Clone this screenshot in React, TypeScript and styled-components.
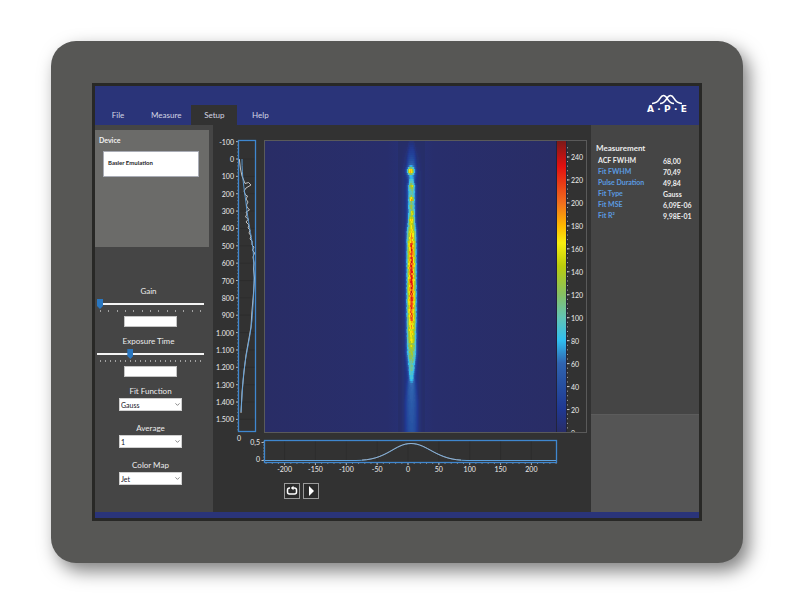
import React, { useState } from "react";
import styled, { createGlobalStyle, css } from "styled-components";
import { ChevronDown } from "lucide-react";

const font = `Lato, "Open Sans", sans-serif`;

const color = {
  navy: "#2a3479",
  bezel: "#575755",
  frame: "#282826",
  side: "#454545",
  stage: "#323232",
  panel: "#6b6b69",
  lowPanel: "#555555",
  accent: "#3f87cf",
  link: "#5b9be0",
  text: "#ececec",
};

const GlobalStyle = createGlobalStyle`
  * { box-sizing: border-box; }
  body { margin: 0; background: #ffffff; font-family: ${font}; }
  button, input, select { font-family: inherit; margin: 0; }
`;

const Page = styled.main`
  min-height: 100vh;
  padding: 41px 51px 42px;
  display: flex;
  flex-direction: column;
`;

const Device = styled.div`
  flex: 1;
  display: flex;
  padding: 42px 41px;
  border-radius: 25px;
  background: ${color.bezel};
  box-shadow: 6px 8px 18px rgba(0, 0, 0, 0.5);
`;

const Screen = styled.div`
  flex: 1;
  display: flex;
  flex-direction: column;
  border: 3px solid ${color.frame};
  background: ${color.stage};
`;

const Header = styled.header`
  display: flex;
  align-items: flex-end;
  justify-content: space-between;
  height: 39px;
  background: ${color.navy};
`;

const Menu = styled.nav`
  display: flex;
`;

const MenuItem = styled.button<{ $active: boolean }>`
  height: 20px;
  min-width: 46px;
  padding: 0 10px;
  border: 0;
  background: ${(p) => (p.$active ? color.stage : "transparent")};
  color: #d4d6e4;
  font-size: 8px;
  line-height: 20px;
`;

const Brand = styled.a`
  display: flex;
  flex-direction: column;
  align-items: center;
  gap: 1px;
  width: 40px;
  margin: 0 12px 12px 0;
  color: #ffffff;
  text-decoration: none;
`;

const BrandName = styled.span`
  display: flex;
  justify-content: space-between;
  width: 100%;
  height: 7px;
  font: bold 9px/7px "DejaVu Sans", sans-serif;
`;

const Body = styled.div`
  flex: 1;
  display: grid;
  grid-template-columns: 118px minmax(0, 1fr) 108px;
`;

const Sidebar = styled.aside`
  padding-top: 5px;
  background: ${color.side};
`;

const DevicePanel = styled.section`
  height: 117px;
  margin-right: 4px;
  padding: 4px 10px 0 4px;
  background: ${color.panel};
`;

const PanelTitle = styled.h2`
  margin: 0;
  color: #f2f2f2;
  font-size: 7px;
  font-weight: 700;
  line-height: 12px;
`;

const DeviceList = styled.ul`
  height: 26px;
  margin: 5px 0 0 4px;
  padding: 0 4px;
  list-style: none;
  border: 1px solid #a9acb5;
  background: #ffffff;
  color: #1e1e28;
  font-size: 6px;
  font-weight: 700;
  line-height: 22px;
`;

const Controls = styled.form`
  display: flex;
  flex-direction: column;
  padding: 37px 9px 0 2px;
`;

const Field = styled.div<{ $kind: "slider" | "choice" }>`
  display: flex;
  flex-direction: column;
  align-items: center;
  ${(p) =>
    p.$kind === "slider"
      ? css`
          height: 50px;

          > label {
            padding-right: 4px;
          }
        `
      : css`
          height: 37px;
        `}
`;

const FieldLabel = styled.label`
  color: ${color.text};
  font-size: 8px;
  line-height: 14px;
`;

const Slider = styled.input`
  appearance: none;
  width: 100%;
  height: 12px;
  background: linear-gradient(#f4f4f4, #f4f4f4) center / 100% 2px no-repeat;

  &::-webkit-slider-thumb {
    appearance: none;
    width: 6px;
    height: 10px;
    background: #2976bf;
    clip-path: polygon(0 0, 100% 0, 100% 70%, 50% 100%, 0 70%);
  }
`;

const TickRow = styled.div`
  display: flex;
  justify-content: space-between;
  width: 100%;
  height: 6px;
  padding: 0 3px;
`;

const Tick = styled.i`
  width: 1px;
  height: 2px;
  background: #a2a2a2;
`;

const NumberBox = styled.input`
  width: 53px;
  height: 11px;
  padding: 0 2px;
  border: 1px solid #c4c4c4;
  background: #ffffff;
  font-size: 7px;
`;

const SelectWrap = styled.div`
  display: grid;
  width: 63px;
  height: 13px;
  align-items: center;

  > * {
    grid-area: 1 / 1;
  }
  > svg {
    justify-self: end;
    margin-right: 1px;
    color: #777777;
    pointer-events: none;
  }
`;

const Select = styled.select`
  appearance: none;
  width: 100%;
  height: 13px;
  padding: 0 1px;
  border: 1px solid #cfcfcf;
  border-radius: 0;
  background: #ffffff;
  color: #14141e;
  font-size: 7px;
  line-height: 10px;
`;

const Stage = styled.section`
  display: flex;
  flex-direction: column;
  padding-top: 8px;
  background: ${color.stage};
`;

const PlotRow = styled.div`
  display: grid;
  grid-template-columns: 51fr 327fr;
`;

const Plot = styled.svg`
  display: block;
  width: 100%;
  height: auto;
  overflow: visible;
  font-family: ${font};
  font-size: 7px;
  fill: ${color.text};
`;

const Transport = styled.div`
  display: flex;
  gap: 3px;
  padding: 9px 0 0 71px;
`;

const IconButton = styled.button`
  display: grid;
  place-items: center;
  width: 16px;
  height: 16px;
  padding: 0;
  border: 1px solid #9a9a9a;
  background: #2b2b2b;
  color: #ffffff;
`;

const Results = styled.aside`
  display: grid;
  grid-template-rows: 289fr 98fr;
  background: ${color.side};
`;

const ResultsTop = styled.section`
  padding: 17px 5px 0;
`;

const ResultsBottom = styled.section`
  border-top: 1px solid #5c5c5c;
  background: ${color.lowPanel};
`;

const ResultsTitle = styled.h2`
  margin: 0;
  color: ${color.text};
  font-size: 8px;
  font-weight: 700;
  line-height: 12px;
`;

const ResultTable = styled.table`
  width: 100%;
  margin-top: 1px;
  border-collapse: collapse;
  font-size: 7px;
  line-height: 11px;
  text-align: left;
`;

const ResultName = styled.th<{ $plain: boolean }>`
  padding: 0 2px;
  color: ${(p) => (p.$plain ? color.text : color.link)};
  font-weight: 700;
  height: 11px;
`;

const ResultValue = styled.td`
  width: 31px;
  padding: 1px 0 0;
  color: ${color.text};
  font-weight: 700;
  line-height: 10px;
  white-space: nowrap;
`;

const Footer = styled.footer`
  height: 6px;
  background: ${color.navy};
`;

type Stop = [number, number, number, number];
const jet: Stop[] = [
  [0, 40, 45, 104],
  [20, 32, 56, 146],
  [40, 38, 78, 160],
  [60, 48, 100, 176],
  [80, 48, 190, 240],
  [100, 98, 196, 180],
  [120, 134, 192, 100],
  [145, 186, 204, 12],
  [165, 248, 238, 16],
  [180, 255, 184, 0],
  [200, 240, 110, 30],
  [232, 226, 16, 16],
  [254, 124, 26, 24],
];

function jetColor(v: number) {
  const value = Math.max(0, Math.min(254, v));
  let i = 1;
  while (i < jet.length - 1 && jet[i][0] < value) i++;
  const a = jet[i - 1];
  const b = jet[i];
  const t = (value - a[0]) / (b[0] - a[0]);
  const mix = (k: 1 | 2 | 3) => Math.round(a[k] + (b[k] - a[k]) * t);
  return `rgb(${mix(1)},${mix(2)},${mix(3)})`;
}

/* Distance from the top edge, level of the plateau, its half width, extra level of the core. */
const beam: [number, number, number, number][] = [
  [0, 8, 3, 0],
  [15, 22, 4, 0],
  [24, 40, 4, 0],
  [34, 40, 4, 0],
  [39, 66, 3, 0],
  [44, 80, 4, 6],
  [52, 74, 4, 6],
  [66, 76, 4, 6],
  [78, 84, 4, 14],
  [90, 126, 5, 26],
  [104, 146, 5, 38],
  [130, 150, 5, 46],
  [160, 150, 5, 46],
  [176, 142, 5, 32],
  [195, 122, 5, 14],
  [212, 94, 5, 12],
  [224, 74, 4, 8],
  [236, 58, 3, 8],
  [242, 34, 4, 4],
  [262, 26, 6, 2],
  [292, 18, 6, 0],
];

const spots: [number, number, number, number][] = [
  [-1, 29, 128, 3.5],
  [0, 44, 46, 2],
  [0, 57, 90, 2],
  [0, 65, 34, 2],
  [1, 71, 50, 2],
  [0, 78, 50, 3],
];

const rand = (x: number, y: number) => {
  const s = Math.sin(x * 127.1 + y * 311.7) * 43758.5453;
  return s - Math.floor(s);
};

function level(dx: number, y: number) {
  let i = 1;
  while (i < beam.length - 1 && beam[i][0] < y) i++;
  const a = beam[i - 1];
  const b = beam[i];
  const t = (y - a[0]) / (b[0] - a[0]);
  const mix = (k: 1 | 2 | 3) => a[k] + (b[k] - a[k]) * t;
  const plateau = mix(1);
  let v = plateau * Math.exp(-Math.pow(Math.abs(dx) / mix(2), 3.4));
  v += mix(3) * Math.exp(-((dx / 1.6) ** 2));
  for (const [sx, sy, amount, r] of spots) {
    v += amount * Math.exp(-((dx - sx) ** 2 + (y - sy) ** 2) / (r * r));
  }
  v *= 1 + (rand(dx, y) - 0.5) * (plateau > 60 ? 0.26 : 0.06);
  return v + 24 * Math.exp(-((dx / 7) ** 2)) * Math.min(1, y / 30);
}

const cells: { x: number; y: number; fill: string }[] = [];
for (let y = 0; y < 291; y += 2) {
  for (let dx = -13; dx <= 13; dx++) {
    cells.push({ x: 147 + dx, y, fill: jetColor(level(dx, y)) });
  }
}

const steps = (from: number, to: number, by: number) =>
  Array.from({ length: Math.floor((to - from) / by) + 1 }, (_, i) => from + i * by);

const thousands = (n: number) =>
  n >= 1000 ? `${Math.floor(n / 1000)}.${String(n % 1000).padStart(3, "0")}` : String(n);

function DelayProfile() {
  const y = (v: number) => 26 + v * 0.1736;
  return (
    <Plot viewBox="0 0 51 300" role="img" aria-label="Vertical profile">
      {steps(-100, 1500, 100).map((v) => (
        <g key={v}>
          <text x="21" y={y(v) + 3} textAnchor="end">{thousands(v)}</text>
          <path d={`M23 ${y(v)}H25`} stroke="#b8b8b8" />
          <path d={`M26 ${y(v)}H42`} stroke="#2d2d2d" />
        </g>
      ))}
      {steps(-100, 1560, 20).map((v) => (
        <path key={v} d={`M24 ${y(v)}h1`} stroke="#999999" strokeWidth="0.6" />
      ))}
      <rect x="25.5" y="7.5" width="17" height="291" fill="none" stroke={color.accent} strokeWidth="1.3" />
      <path
        d="M26.3 26L27.5 36L29 43L31 48L32 50.5L35.5 49.5L38 52L33 55L31 58L32.5 62L34.5 63L33 66L35 69L33.5 72L34 74L36.5 77L33 79L34 81L32.5 84L35.5 86L33 89L36 92L35 95L37 97L36 100L38 103L37 106L39 108L39 112L41 114L39.5 117L41.5 120L40 124L41 130L40.5 136L41.5 145L40.5 160L38.8 180L38 194L35.5 208L33 222L31 239L29 259L28 280"
        fill="none"
        stroke="#d0d0d0"
        strokeWidth="0.9"
      />
      <path
        d="M29 26C29 44 31 54 33 70C35 89 38 100 40 116C42 140 41 160 39 187C36 213 32 222 30 248L28 279"
        fill="none"
        stroke="#5da2df"
        strokeWidth="0.9"
      />
      <text x="26" y="308" textAnchor="middle">0</text>
    </Plot>
  );
}

function Heatmap() {
  const y = (v: number) => 299.5 - v * 1.148;
  return (
    <Plot viewBox="0 0 327 300" role="img" aria-label="Intensity map">
      <defs>
        <linearGradient id="scale" x1="0" y1="1" x2="0" y2="0">
          {jet.map(([v]) => (
            <stop key={v} offset={v / 254} stopColor={jetColor(v)} />
          ))}
        </linearGradient>
        <linearGradient id="field">
          <stop offset="0" stopColor="#292d66" />
          <stop offset="0.42" stopColor="#282e6c" />
          <stop offset="0.5" stopColor="#26327a" />
          <stop offset="0.58" stopColor="#282e6c" />
          <stop offset="1" stopColor="#292d66" />
        </linearGradient>
        <filter id="soften">
          <feGaussianBlur stdDeviation="0.4" />
        </filter>
        <clipPath id="mapArea">
          <rect x="1" y="8" width="322" height="291" />
        </clipPath>
      </defs>
      <g clipPath="url(#mapArea)">
        <rect x="1" y="8" width="291" height="291" fill="url(#field)" />
        <g transform="translate(0 8)" filter="url(#soften)">
          {cells.map((c) => (
            <rect key={`${c.x}-${c.y}`} x={c.x} y={c.y} width="1" height="2" fill={c.fill} shapeRendering="crispEdges" />
          ))}
        </g>
        <rect x="292" y="8" width="11" height="291" fill="#22243c" />
        <rect x="293" y="8" width="9" height="291" fill="url(#scale)" />
        {steps(0, 250, 4).map((v) => (
          <path key={v} d={`M303 ${y(v)}h1`} stroke="#cccccc" strokeWidth="0.8" />
        ))}
        {steps(0, 240, 20).map((v) => (
          <g key={v}>
            <path d={`M303 ${y(v)}h2.5`} stroke="#cccccc" />
            <text x="307" y={y(v) + 3}>{v}</text>
          </g>
        ))}
      </g>
      <rect x="0.5" y="7.5" width="322" height="292" fill="none" stroke="#5a5a5a" />
    </Plot>
  );
}

function TimeProfile() {
  const x = (v: number) => 195 + v * 0.617;
  return (
    <Plot viewBox="0 0 378 41" role="img" aria-label="Horizontal profile">
      <text x="47" y="12" textAnchor="end">0,5</text>
      <text x="47" y="29" textAnchor="end">0</text>
      <path d="M48.500 9.500H51M48.500 27.500H51" stroke="#b8b8b8" />
      {steps(-200, 200, 50).map((v) => (
        <g key={v}>
          <path d={`M${x(v)} 8V29`} stroke="#2d2d2d" />
          <path d={`M${x(v)} 30V32`} stroke="#b8b8b8" />
          <text x={x(v)} y="39" textAnchor="middle">{v}</text>
        </g>
      ))}
      {steps(-230, 240, 10).map((v) => (
        <path key={v} d={`M${x(v)} 30v1`} stroke="#999999" strokeWidth="0.8" />
      ))}
      {steps(9, 28, 3).map((v) => (
        <path key={v} d={`M50 ${v}h1`} stroke="#999999" strokeWidth="0.8" />
      ))}
      <rect x="51.500" y="7.500" width="292" height="22" fill="none" stroke={color.accent} strokeWidth="1.3" />
      <path
        d="M52 27.500H143C174 27.500 182 10.500 198 10.500S224 27.500 254 27.500H343"
        fill="none"
        stroke="#5da2df"
      />
      <path
        d="M149 27C175 26 181 10.500 198 10.500S222 26 248 27"
        fill="none"
        stroke="#a9b8c8"
        strokeWidth="0.7"
      />
    </Plot>
  );
}

function SliderField({ id, label, value, ticks }: { id: string; label: string; value: number; ticks: number }) {
  const [position, setPosition] = useState(value);
  return (
    <Field $kind="slider">
      <FieldLabel htmlFor={id}>{label}</FieldLabel>
      <Slider id={id} type="range" value={position} onChange={(e) => setPosition(Number(e.target.value))} />
      <TickRow aria-hidden="true">
        {steps(1, ticks, 1).map((n) => (
          <Tick key={n} />
        ))}
      </TickRow>
      <NumberBox type="text" aria-label={`${label} value`} />
    </Field>
  );
}

function SelectField({ id, label, options }: { id: string; label: string; options: string[] }) {
  return (
    <Field $kind="choice">
      <FieldLabel htmlFor={id}>{label}</FieldLabel>
      <SelectWrap>
        <Select id={id}>
          {options.map((o) => (
            <option key={o}>{o}</option>
          ))}
        </Select>
        <ChevronDown size={7} strokeWidth={3} />
      </SelectWrap>
    </Field>
  );
}

const menu = ["File", "Measure", "Setup", "Help"];

const results = [
  ["ACF FWHM", "68,00"],
  ["Fit FWHM", "70,49"],
  ["Pulse Duration", "49,84"],
  ["Fit Type", "Gauss"],
  ["Fit MSE", "6,09E-06"],
  ["Fit R²", "9,98E-01"],
];

export default function App() {
  const [tab, setTab] = useState("Setup");
  return (
    <Page>
      <GlobalStyle />
      <Device>
        <Screen>
          <Header>
            <Menu>
              {menu.map((name) => (
                <MenuItem key={name} $active={name === tab} onClick={() => setTab(name)}>
                  {name}
                </MenuItem>
              ))}
            </Menu>
            <Brand href="#">
              <svg width="32" height="11" viewBox="0 0 32 11" fill="none" stroke="currentColor" strokeWidth="1.6">
                <path d="M1 9.500C10 9.500 8 1.500 12.500 1.500S16 9.500 23 9.500" />
                <path d="M9 9.500C16 9.500 15 1.500 19.500 1.500S22 9.500 31 9.500" />
              </svg>
              <BrandName>
                <span>A</span>
                <span>·</span>
                <span>P</span>
                <span>·</span>
                <span>E</span>
              </BrandName>
            </Brand>
          </Header>
          <Body>
            <Sidebar>
              <DevicePanel>
                <PanelTitle>Device</PanelTitle>
                <DeviceList>
                  <li>Basler Emulation</li>
                </DeviceList>
              </DevicePanel>
              <Controls>
                <SliderField id="gain" label="Gain" value={0} ticks={13} />
                <SliderField id="exposure" label="Exposure Time" value={30} ticks={21} />
                <SelectField id="fit" label="Fit Function" options={["Gauss"]} />
                <SelectField id="average" label="Average" options={["1"]} />
                <SelectField id="colormap" label="Color Map" options={["Jet"]} />
              </Controls>
            </Sidebar>
            <Stage>
              <PlotRow>
                <DelayProfile />
                <Heatmap />
              </PlotRow>
              <TimeProfile />
              <Transport>
                <IconButton aria-label="Repeat">
                  <svg width="12" height="12" viewBox="0 0 12 12" fill="none" stroke="currentColor" strokeWidth="1.5">
                    <path d="M4 3H3.500Q1.500 3 1.500 5V7Q1.500 9 3.500 9H8.500Q10.500 9 10.500 7V5Q10.500 3 8.500 3H7" />
                    <path d="M7.500 0.800V5.200L4.800 3Z" fill="currentColor" stroke="none" />
                  </svg>
                </IconButton>
                <IconButton aria-label="Play">
                  <svg width="12" height="12" viewBox="0 0 12 12" fill="currentColor">
                    <path d="M4 1L9 6L4 11Z" />
                  </svg>
                </IconButton>
              </Transport>
            </Stage>
            <Results>
              <ResultsTop>
                <ResultsTitle>Measurement</ResultsTitle>
                <ResultTable>
                  <tbody>
                    {results.map(([name, value], i) => (
                      <tr key={name}>
                        <ResultName scope="row" $plain={i === 0}>{name}</ResultName>
                        <ResultValue>{value}</ResultValue>
                      </tr>
                    ))}
                  </tbody>
                </ResultTable>
              </ResultsTop>
              <ResultsBottom />
            </Results>
          </Body>
          <Footer />
        </Screen>
      </Device>
    </Page>
  );
}
